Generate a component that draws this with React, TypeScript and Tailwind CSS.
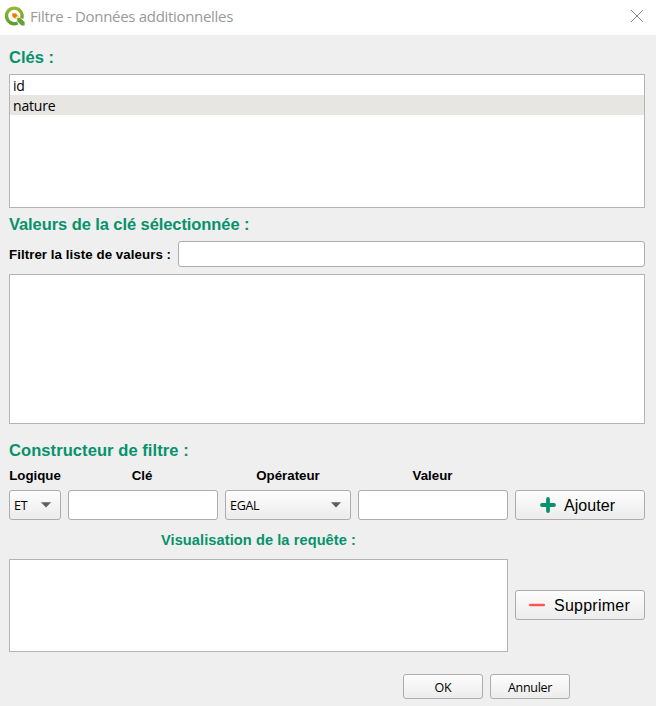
import type { ReactNode } from "react";

const arial = "font-['Liberation_Sans',Arial,sans-serif]";
const segoe = "font-['Open_Sans','Noto_Sans',sans-serif]";
const raised = "rounded-[3px] border border-[#adadad] bg-linear-to-b from-[#fdfdfd] to-[#ececec]";
const field = "rounded-[3px] border border-[#adadad] bg-white";

function Heading({ children, className }: { children: ReactNode; className: string }) {
  return <h2 className={`whitespace-nowrap font-bold text-[#06926b] ${arial} ${className}`}>{children}</h2>;
}

function Logo() {
  return (
    <svg width="20" height="20" viewBox="0 0 20 20" fill="none">
      <defs>
        <linearGradient id="ring" x1="0" y1="0" x2="0" y2="20" gradientUnits="userSpaceOnUse">
          <stop stopColor="#9abc2f" />
          <stop offset="1" stopColor="#569a2b" />
        </linearGradient>
      </defs>
      <path d="M16.700 12.400A7.800 7.800 0 1 0 12.600 17" stroke="url(#ring)" strokeWidth="3.400" />
      <path fill="#67a12e" d="M12.300 11.800h2.700l4.600 4.300v3.300h-3.200l-4.100-4.200Z" />
      <path fill="#f6d468" d="M7.300 7.300h4l3.200 3.700h-2.900v3L7.300 10.800Z" />
      <path fill="#ee7913" d="M7.400 7.400h3.100l2 2.200-2.700 2.700-2.400-2Z" />
    </svg>
  );
}

function Arrow() {
  return (
    <svg width="10" height="6" viewBox="0 0 10 6"><path d="M0 .2h10L5 5.400Z" fill="#5d5d5d" /></svg>
  );
}

export default function App() {
  return (
    <main className={`flex h-[706px] w-[656px] flex-col overflow-hidden bg-[#efefef] text-black ${segoe}`}>
      <header className="flex h-[35px] shrink-0 items-center bg-white pr-[12px] pl-[5px]">
        <div className="mb-[3px]"><Logo /></div>
        <span className="mb-[4px] ml-[5px] whitespace-nowrap text-[15px] leading-[20px] tracking-[-0.310px] text-[#999999]">Filtre - Données additionnelles</span>
        <svg className="mb-[3px] ml-auto" width="14" height="14" viewBox="0 0 14 14"><path d="M1 1l12 12M13 1L1 13" stroke="#858585" strokeWidth="1" /></svg>
      </header>

      <div className="flex flex-1 flex-col pr-[11px] pl-[9px]">
        <Heading className="mt-[12px] h-[20px] text-[16.500px] leading-[20px]">Clés :</Heading>
        <ul className="mt-[7px] h-[134px] border border-[#b4b4b4] bg-white text-[14px] leading-[22px] tracking-[-0.200px]">
          <li className="h-[20px] pl-[3px]">id</li>
          <li className="h-[20px] bg-[#e7e6e2] pl-[3px]">nature</li>
        </ul>

        <Heading className="mt-[6px] h-[20px] text-[16.500px] leading-[20px] tracking-[-0.080px]">Valeurs de la clé sélectionnée :</Heading>
        <div className="mt-[7px] flex h-[26px] items-center">
          <label className={`w-[169px] shrink-0 pt-[2px] whitespace-nowrap text-[13.300px] font-bold tracking-[0.060px] ${arial}`}>Filtrer la liste de valeurs :</label>
          <div className={`h-[26px] flex-1 ${field}`} />
        </div>
        <div className="mt-[7px] h-[150px] border border-[#b4b4b4] bg-white" />

        <Heading className="mt-[16px] h-[20px] text-[16.500px] leading-[20px] tracking-[0.080px]">Constructeur de filtre :</Heading>
        <div className={`mt-[7px] grid h-[16px] grid-cols-[52px_150px_126px_150px_130px] gap-x-[7px] text-center text-[13.300px] leading-[18px] font-bold ${arial}`}>
          <span>Logique</span><span className="pr-[2px]">Clé</span><span>Opérateur</span><span className="pr-[1px]">Valeur</span>
        </div>
        <div className="mt-[7px] grid h-[30px] grid-cols-[52px_150px_126px_150px_130px] gap-x-[7px]">
          <div className={`flex items-center justify-between pr-[9px] pl-[4px] text-[12.500px] tracking-[-0.200px] ${raised}`}><span className="pt-[2px]">ET</span><Arrow /></div>
          <div className={field} />
          <div className={`flex items-center justify-between pr-[9px] pl-[4px] text-[12.500px] tracking-[-0.300px] ${raised}`}><span className="pt-[2px]">EGAL</span><Arrow /></div>
          <div className={field} />
          <button className={`flex items-center pl-[24px] text-[16px] ${arial} ${raised}`}>
            <svg width="16" height="16" viewBox="0 0 16 16"><path d="M8 2v12M2 8h12" stroke="#06926b" strokeWidth="3.800" strokeLinecap="round" /></svg>
            <span className="ml-[8px] pt-[2px] tracking-[0.070px]">Ajouter</span>
          </button>
        </div>

        <Heading className="mt-[10px] h-[20px] w-[499px] text-center text-[14.600px] leading-[20px] tracking-[0.080px]">Visualisation de la requête :</Heading>
        <div className="mt-[9px] flex h-[93px] items-start gap-[7px]">
          <div className="h-[93px] w-[499px] border border-[#b4b4b4] bg-white" />
          <button className={`mt-[31px] flex h-[30px] w-[130px] items-center pl-[13px] text-[16px] ${arial} ${raised}`}>
            <svg width="16" height="16" viewBox="0 0 16 16"><path d="M1.200 8h13.600" stroke="#ff5555" strokeWidth="2.600" strokeLinecap="round" /></svg>
            <span className="ml-[9px] pt-[2px] tracking-[0.250px]">Supprimer</span>
          </button>
        </div>

        <footer className="mt-[22px] ml-[394px] flex gap-[7px]">
          <button className={`h-[25px] w-[80px] pt-[3px] text-[12.500px] leading-[20px] tracking-[-0.300px] ${raised}`}>OK</button>
          <button className={`h-[25px] w-[80px] pt-[3px] text-[12.500px] leading-[20px] tracking-[-0.300px] ${raised}`}>Annuler</button>
        </footer>
      </div>
    </main>
  );
}
